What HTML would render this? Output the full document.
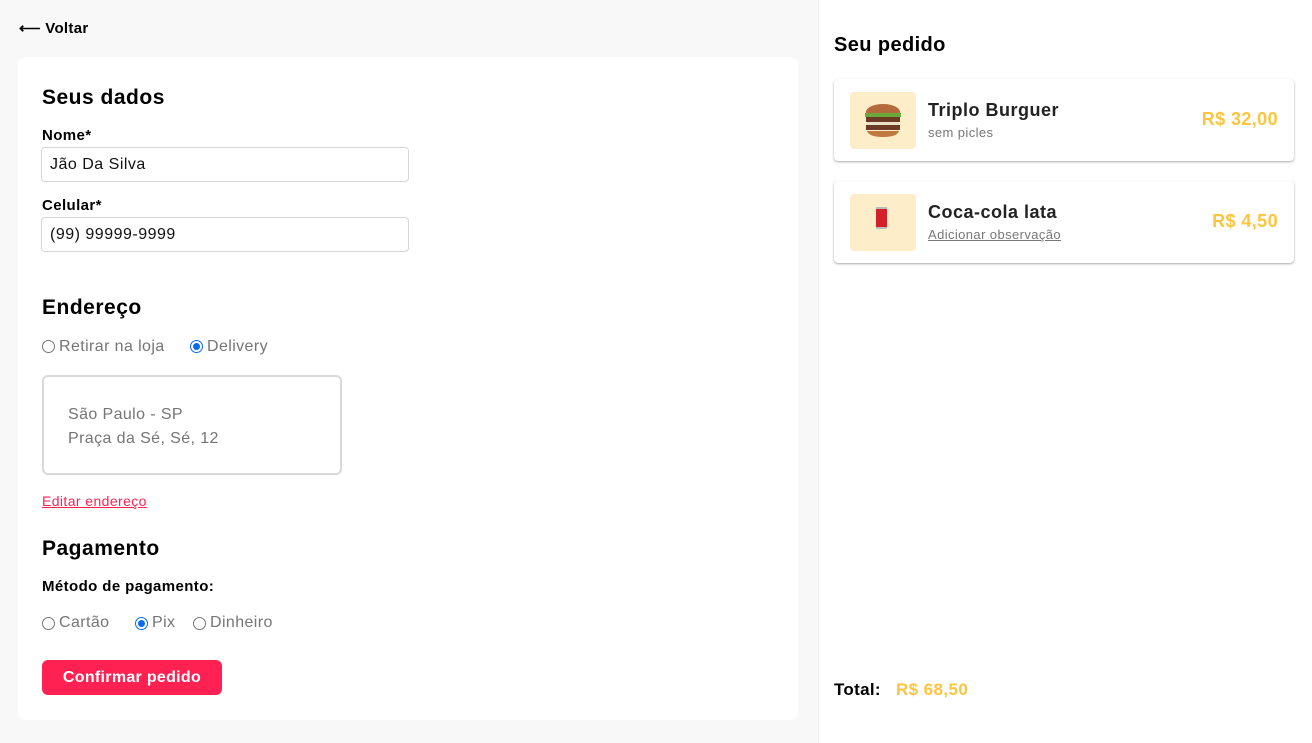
<!DOCTYPE html>
<html><head><meta charset="utf-8"><style>
*{box-sizing:border-box;margin:0;padding:0}
body{width:1312px;height:743px;position:relative;font-family:"Liberation Sans",sans-serif;background:#f8f8f8;overflow:hidden;color:#000}
.a{position:absolute;white-space:nowrap}
.left{position:absolute;left:0;top:0;width:818px;height:743px;background:#f8f8f8}
.right{position:absolute;left:818px;top:0;width:494px;height:743px;background:#fff;border-left:1px solid #ececec}
.card{position:absolute;left:18px;top:57px;width:780px;height:663px;background:#fff;border-radius:8px}
h2{font-size:21px;font-weight:bold;letter-spacing:0.5px}
.lbl{font-size:15px;font-weight:bold;letter-spacing:0.4px}
.inp{position:absolute;left:41px;width:368px;height:35px;border:1px solid #d6d6d6;border-radius:4px;font-size:16px;padding:8px 0 0 8px;color:#111;letter-spacing:0.5px}
.r{position:absolute;width:13px;height:13px;border:1px solid #777;border-radius:50%;background:#fff}
.r.on{border-color:#0b6bf0}
.r.on:after{content:"";position:absolute;left:2px;top:2px;width:7px;height:7px;border-radius:50%;background:#0b6bf0}
.rt{font-size:16px;color:#757575;letter-spacing:0.4px}
.item{position:absolute;left:834px;width:460px;height:82px;background:#fff;border-radius:4px;box-shadow:0 1px 2px rgba(0,0,0,.35)}
.thumb{position:absolute;left:16px;top:13px;width:66px;height:57px;background:#fdedc9;border-radius:4px}
.nm{position:absolute;left:94px;top:21px;font-size:18px;font-weight:bold;color:#222;letter-spacing:0.5px}
.sub{position:absolute;left:94px;top:46px;font-size:13px;color:#777;letter-spacing:0.4px}
.pr{position:absolute;right:16px;top:30px;font-size:18px;font-weight:bold;color:#ffc43d;letter-spacing:0.4px}
</style></head><body>
<div class="left"></div>
<div class="a" style="left:19px;top:19px;font-size:15px;font-weight:bold;letter-spacing:0.3px">⟵ Voltar</div>
<div class="card"></div>
<h2 class="a" style="left:42px;top:86px">Seus dados</h2>
<div class="a lbl" style="left:42px;top:127px">Nome*</div>
<div class="inp" style="top:147px">Jão Da Silva</div>
<div class="a lbl" style="left:42px;top:197px">Celular*</div>
<div class="inp" style="top:217px">(99) 99999-9999</div>
<h2 class="a" style="left:42px;top:296px">Endereço</h2>
<span class="r" style="left:42px;top:340px"></span><div class="a rt" style="left:59px;top:338px">Retirar na loja</div>
<span class="r on" style="left:190px;top:340px"></span><div class="a rt" style="left:207px;top:338px">Delivery</div>
<div class="a" style="left:42px;top:375px;width:300px;height:100px;border:2px solid #d9d9d9;border-radius:6px"></div>
<div class="a rt" style="left:68px;top:403px;line-height:24px">São Paulo - SP<br>Praça da Sé, Sé, 12</div>
<div class="a" style="left:42px;top:493px;font-size:14px;color:#ff2152;text-decoration:underline;letter-spacing:0.4px">Editar endereço</div>
<h2 class="a" style="left:42px;top:537px">Pagamento</h2>
<div class="a lbl" style="left:42px;top:578px">Método de pagamento:</div>
<span class="r" style="left:42px;top:617px"></span><div class="a rt" style="left:59px;top:614px">Cartão</div>
<span class="r on" style="left:135px;top:617px"></span><div class="a rt" style="left:152px;top:614px">Pix</div>
<span class="r" style="left:193px;top:617px"></span><div class="a rt" style="left:210px;top:614px">Dinheiro</div>
<div class="a" style="left:42px;top:660px;width:180px;height:35px;background:#ff2152;border-radius:6px;color:#fff;font-size:16px;font-weight:bold;text-align:center;line-height:35px;letter-spacing:0.3px">Confirmar pedido</div>

<div class="right"></div>
<div class="a" style="left:834px;top:34px;font-size:20px;font-weight:bold;letter-spacing:0.4px">Seu pedido</div>
<div class="item" style="top:79px">
 <div class="thumb"><svg width="66" height="57" viewBox="0 0 66 57"><ellipse cx="33" cy="20" rx="17" ry="8" fill="#b46a3a"/><rect x="15" y="21" width="36" height="4" fill="#6aa83a"/><rect x="16" y="25" width="34" height="5" fill="#6b3a25"/><rect x="17" y="30" width="32" height="3" fill="#e8e0c8"/><rect x="16" y="33" width="34" height="5" fill="#6b3a25"/><path d="M17 39h32q-2 6-16 6t-16-6z" fill="#c07a40"/></svg></div>
 <div class="nm">Triplo Burguer</div><div class="sub">sem picles</div><div class="pr">R$ 32,00</div>
</div>
<div class="item" style="top:181px">
 <div class="thumb"><svg width="66" height="57" viewBox="0 0 66 57"><rect x="26" y="14" width="11" height="20" rx="2" fill="#d4202a"/><rect x="26" y="13" width="11" height="2" fill="#bbb"/><rect x="26" y="33" width="11" height="2" fill="#bbb"/></svg></div>
 <div class="nm">Coca-cola lata</div><div class="sub" style="text-decoration:underline">Adicionar observação</div><div class="pr">R$ 4,50</div>
</div>
<div class="a" style="left:834px;top:680px;font-size:17px;font-weight:bold;letter-spacing:0.3px">Total:</div>
<div class="a" style="left:896px;top:680px;font-size:17px;font-weight:bold;color:#ffc43d;letter-spacing:0.4px">R$ 68,50</div>
</body></html>
